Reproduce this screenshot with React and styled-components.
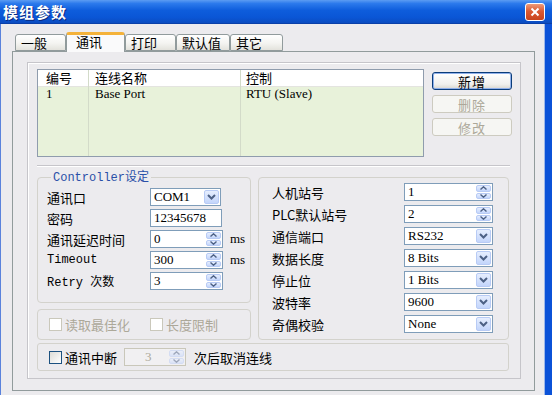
import React from "react";
import styled, { createGlobalStyle } from "styled-components";

const BODY = "#ECEBEE";
const FONT = `"Liberation Serif", "Noto Sans CJK SC", serif`;
const CJK = `"Noto Sans CJK SC", "Liberation Serif", sans-serif`;
const MONO = `"Liberation Mono", "Noto Sans CJK SC", monospace`;

const GlobalStyle = createGlobalStyle`
  html, body { margin: 0; padding: 0; background: ${BODY}; overflow: hidden; }
  body { font-family: ${FONT}; font-size: 13px; color: #000; }
  * { box-sizing: border-box; }
`;

const Window = styled.div`
  width: 552px;
  height: 395px;
  display: flex;
  flex-direction: column;
  overflow: hidden;
  background: ${BODY};
`;

const TitleBar = styled.div`
  height: 24px;
  flex: none;
  display: flex;
  align-items: center;
  justify-content: space-between;
  padding: 0 7px 0 3px;
  background: linear-gradient(#5C9CF2 0%, #2C7AEC 15%, #0E5DDC 45%, #0A56D6 75%, #0B4CC0 100%);
  border-bottom: 1px solid #0A3FA8;
`;

const TitleText = styled.span`
  color: #fff;
  font-family: ${CJK};
  font-weight: bold;
  font-size: 15px;
  letter-spacing: 1px;
  text-shadow: 1px 1px 0 #0A2A80;
`;

const CloseButton = styled.div`
  width: 20px;
  height: 18px;
  border: 1px solid #fff;
  border-radius: 3px;
  background: linear-gradient(#EE9B7A, #DA5A33 45%, #C9441C);
  display: flex;
  align-items: center;
  justify-content: center;
`;

const Frame = styled.div`
  flex: 1;
  border-left: 1px solid #5A82DC;
  border-right: 7px solid #0B52D8;
  box-shadow: inset -1px 0 0 #9DB8EA;
  padding: 8px 0 0 11px;
`;

const TabStrip = styled.div`
  display: flex;
  align-items: flex-end;
  height: 19px;
  padding-left: 3px;
`;

const Tab = styled.div`
  width: ${(p) => p.$w}px;
  height: ${(p) => (p.$active ? 20 : 17)}px;
  margin-bottom: ${(p) => (p.$active ? -1 : 0)}px;
  position: relative;
  z-index: ${(p) => (p.$active ? 1 : 0)};
  border: 1px solid #919B9C;
  border-bottom: ${(p) => (p.$active ? "none" : "1px solid #919B9C")};
  border-top: ${(p) => (p.$active ? "3px solid #F4B23A" : "1px solid #919B9C")};
  border-radius: 3px 3px 0 0;
  background: ${(p) => (p.$active ? "#FAFAFB" : "linear-gradient(#FFFFFF, #F4F4F1 55%, #E3E2DC)")};
  padding-left: ${(p) => (p.$active ? 9 : 5)}px;
  font-family: ${CJK};
  font-size: 13px;
  line-height: ${(p) => (p.$active ? 14 : 15)}px;
`;

const TabPage = styled.div`
  width: 523px;
  height: 340px;
  border: 1px solid #919B9C;
  background: ${BODY};
  padding: 10px 12px 0 14px;
`;

const Inner = styled.div`
  width: 494px;
  height: 317px;
  border: 1px solid #C6C5CA;
  box-shadow: inset 1px 1px 0 #fff;
  padding: 6px 0 0 9px;
`;

const TopRow = styled.div`
  display: flex;
`;

const List = styled.div`
  width: 387px;
  height: 88px;
  border: 1px solid #8F9CAD;
  background: #E8F2DA;
  display: flex;
`;

const ListCol = styled.div`
  width: ${(p) => (p.$w ? `${p.$w}px` : "auto")};
  flex: ${(p) => (p.$w ? "none" : 1)};
  border-right: ${(p) => (p.$last ? "none" : "1px solid #D3DBC9")};
  display: flex;
  flex-direction: column;
`;

const HeadCell = styled.div`
  height: 17px;
  background: #fff;
  border-bottom: 1px solid #E4E4E0;
  padding-left: ${(p) => p.$pad}px;
  font-family: ${CJK};
  font-size: 13px;
  line-height: 16px;
`;

const BodyCell = styled.div`
  height: 14px;
  padding-left: ${(p) => p.$pad}px;
  font-size: 13px;
  line-height: 14px;
`;

const ButtonCol = styled.div`
  margin-left: 8px;
  padding-top: 3px;
  display: flex;
  flex-direction: column;
  gap: 5px;
`;

const Button = styled.div`
  width: 80px;
  height: 18px;
  border-radius: 3px;
  display: flex;
  align-items: center;
  justify-content: center;
  font-family: ${CJK};
  font-size: 13px;
  letter-spacing: 1px;
  border: 1px solid ${(p) => (p.$disabled ? "#CDCBC0" : "#0A3C7A")};
  background: ${(p) => (p.$disabled ? "#F6F6F3" : "linear-gradient(#FFFFFF, #F0F0EE 70%, #D8D6CE)")};
  box-shadow: ${(p) => (p.$disabled ? "none" : "inset 0 0 0 1px #8FB0EA")};
  color: ${(p) => (p.$disabled ? "#ACA899" : "#000")};
`;

const Separator = styled.div`
  width: 473px;
  margin-top: 8px;
  border-top: 1px solid #C6C5CA;
  border-bottom: 1px solid #fff;
`;

const MiddleRow = styled.div`
  display: flex;
  gap: 7px;
  margin-top: 10px;
`;

const LeftCol = styled.div`
  width: 214px;
  display: flex;
  flex-direction: column;
  gap: 6px;
`;

const Group = styled.div`
  position: relative;
  width: ${(p) => p.$w}px;
  height: ${(p) => p.$h}px;
  border: 1px solid #D3D2CC;
  border-radius: 4px;
  padding: ${(p) => p.$pad};
`;

const Legend = styled.span`
  position: absolute;
  top: -7px;
  left: 13px;
  padding: 0 2px;
  background: ${BODY};
  color: #2A50A8;
  font-family: ${MONO};
  font-size: 12px;
  line-height: 14px;
`;

const FormGrid = styled.div`
  display: grid;
  grid-template-columns: ${(p) => p.$cols};
  grid-auto-rows: 18px;
  row-gap: ${(p) => p.$gap}px;
  column-gap: 8px;
  align-items: center;
`;

const Label = styled.span`
  font-family: ${(p) => (p.$mono ? MONO : CJK)};
  font-size: ${(p) => (p.$mono ? 12 : 13)}px;
  white-space: nowrap;
`;

const Unit = styled.span`
  font-size: 13px;
`;

const Field = styled.div`
  width: ${(p) => p.$w}px;
  height: 18px;
  display: flex;
  align-items: center;
  border: 1px solid ${(p) => (p.$disabled ? "#C9C7BA" : "#7F9DB9")};
  background: ${(p) => (p.$disabled ? "#F1F0F2" : "#fff")};
  padding: 0 1px 0 3px;
`;

const FieldText = styled.span`
  flex: 1;
  font-size: 13px;
  line-height: 16px;
  color: ${(p) => (p.$disabled ? "#ACA899" : "#000")};
  padding-left: ${(p) => p.$indent || 0}px;
`;

const DropButton = styled.div`
  width: 15px;
  height: 14px;
  border: 1px solid #B8CBF5;
  border-radius: 2px;
  background: linear-gradient(#E6EEFE, #C3D5FB);
  display: flex;
  align-items: center;
  justify-content: center;
`;

const SpinBox = styled.div`
  width: 15px;
  height: 14px;
  display: flex;
  flex-direction: column;
  gap: 1px;
  opacity: ${(p) => (p.$disabled ? 0.5 : 1)};
`;

const SpinHalf = styled.div`
  flex: 1;
  border: 1px solid #B8CBF5;
  border-radius: 2px;
  background: linear-gradient(#E6EEFE, #C3D5FB);
  display: flex;
  align-items: center;
  justify-content: center;
`;

const CheckRow = styled.div`
  display: flex;
  align-items: center;
  height: 100%;
`;

const CheckItem = styled.label`
  display: flex;
  align-items: center;
  width: ${(p) => (p.$w ? `${p.$w}px` : "auto")};
  font-family: ${CJK};
  font-size: 13px;
  color: ${(p) => (p.$disabled ? "#ACA899" : "#000")};
`;

const Box = styled.span`
  width: 13px;
  height: 13px;
  margin-right: 3px;
  border: 1px solid ${(p) => (p.$disabled ? "#CAC8BB" : "#1C5180")};
  background: ${(p) => (p.$disabled ? "#fff" : "linear-gradient(135deg, #DCDCD7, #FFFFFF)")};
`;

const BottomBox = styled.div`
  width: 472px;
  height: 28px;
  margin-top: 3px;
  border: 1px solid #D3D2CC;
  border-radius: 3px;
  padding-left: 11px;
  display: flex;
  align-items: center;
`;

const Trailing = styled.span`
  margin-left: 8px;
  font-family: ${CJK};
  font-size: 13px;
`;

const Chevron = ({ dir }) => (
  <svg width="9" height={dir === "down" ? 6 : 4} viewBox={dir === "down" ? "0 0 9 6" : "0 0 9 4"}>
    {dir === "down" && <path d="M1 1l3.5 3.5L8 1" stroke="#4D6185" strokeWidth="2" fill="none" />}
    {dir === "up" && <path d="M1.5 3.5L4.5 0.8L7.5 3.5" stroke="#4D6185" strokeWidth="1.4" fill="none" />}
    {dir === "dn" && <path d="M1.5 0.5L4.5 3.2L7.5 0.5" stroke="#4D6185" strokeWidth="1.4" fill="none" />}
  </svg>
);

const Combo = ({ value, w }) => (
  <Field $w={w}>
    <FieldText>{value}</FieldText>
    <DropButton>
      <Chevron dir="down" />
    </DropButton>
  </Field>
);

const Spin = ({ value, w, disabled, indent }) => (
  <Field $w={w} $disabled={disabled}>
    <FieldText $disabled={disabled} $indent={indent}>
      {value}
    </FieldText>
    <SpinBox $disabled={disabled}>
      <SpinHalf>
        <Chevron dir="up" />
      </SpinHalf>
      <SpinHalf>
        <Chevron dir="dn" />
      </SpinHalf>
    </SpinBox>
  </Field>
);

const Text = ({ value, w }) => (
  <Field $w={w}>
    <FieldText>{value}</FieldText>
  </Field>
);

const columns = [
  { head: "编号", w: 51, pad: 8, cells: ["1"] },
  { head: "连线名称", w: 152, pad: 6, cells: ["Base Port"] },
  { head: "控制", pad: 5, cells: ["RTU (Slave)"], last: true },
];

const rightRows = [
  ["人机站号", "spin", "1"],
  ["PLC默认站号", "spin", "2"],
  ["通信端口", "combo", "RS232"],
  ["数据长度", "combo", "8 Bits"],
  ["停止位", "combo", "1 Bits"],
  ["波特率", "combo", "9600"],
  ["奇偶校验", "combo", "None"],
];

export default function App() {
  return (
    <Window>
      <GlobalStyle />
      <TitleBar>
        <TitleText>模组参数</TitleText>
        <CloseButton>
          <svg width="10" height="10" viewBox="0 0 10 10">
            <path d="M1.5 1.5l7 7M8.5 1.5l-7 7" stroke="#fff" strokeWidth="2" />
          </svg>
        </CloseButton>
      </TitleBar>
      <Frame>
        <TabStrip>
          <Tab $w={51}>一般</Tab>
          <Tab $w={59} $active>
            通讯
          </Tab>
          <Tab $w={51}>打印</Tab>
          <Tab $w={54}>默认值</Tab>
          <Tab $w={53}>其它</Tab>
        </TabStrip>
        <TabPage>
          <Inner>
            <TopRow>
              <List>
                {columns.map((c) => (
                  <ListCol key={c.head} $w={c.w} $last={c.last}>
                    <HeadCell $pad={c.pad}>{c.head}</HeadCell>
                    {c.cells.map((v) => (
                      <BodyCell key={v} $pad={c.pad}>
                        {v}
                      </BodyCell>
                    ))}
                  </ListCol>
                ))}
              </List>
              <ButtonCol>
                <Button>新增</Button>
                <Button $disabled>删除</Button>
                <Button $disabled>修改</Button>
              </ButtonCol>
            </TopRow>
            <Separator />
            <MiddleRow>
              <LeftCol>
                <Group $w={214} $h={126} $pad="10px 0 0 9px">
                  <Legend>Controller设定</Legend>
                  <FormGrid $cols="95px 72px auto" $gap={3}>
                    <Label>通讯口</Label>
                    <Combo value="COM1" w={71} />
                    <span />
                    <Label>密码</Label>
                    <Text value="12345678" w={72} />
                    <span />
                    <Label>通讯延迟时间</Label>
                    <Spin value="0" w={73} />
                    <Unit>ms</Unit>
                    <Label $mono>Timeout</Label>
                    <Spin value="300" w={73} />
                    <Unit>ms</Unit>
                    <Label $mono>Retry 次数</Label>
                    <Spin value="3" w={73} />
                    <span />
                  </FormGrid>
                </Group>
                <Group $w={214} $h={31} $pad="0 0 0 11px">
                  <CheckRow>
                    <CheckItem $disabled $w={101}>
                      <Box $disabled />
                      读取最佳化
                    </CheckItem>
                    <CheckItem $disabled>
                      <Box $disabled />
                      长度限制
                    </CheckItem>
                  </CheckRow>
                </Group>
              </LeftCol>
              <Group $w={251} $h={163} $pad="5px 0 0 13px">
                <FormGrid $cols="124px 89px" $gap={4}>
                  {rightRows.map(([label, kind, value]) => (
                    <React.Fragment key={label}>
                      <Label>{label}</Label>
                      {kind === "spin" ? <Spin value={value} w={89} /> : <Combo value={value} w={89} />}
                    </React.Fragment>
                  ))}
                </FormGrid>
              </Group>
            </MiddleRow>
            <BottomBox>
              <CheckItem $w={75}>
                <Box />
                通讯中断
              </CheckItem>
              <Spin value="3" w={62} disabled indent={17} />
              <Trailing>次后取消连线</Trailing>
            </BottomBox>
          </Inner>
        </TabPage>
      </Frame>
    </Window>
  );
}
